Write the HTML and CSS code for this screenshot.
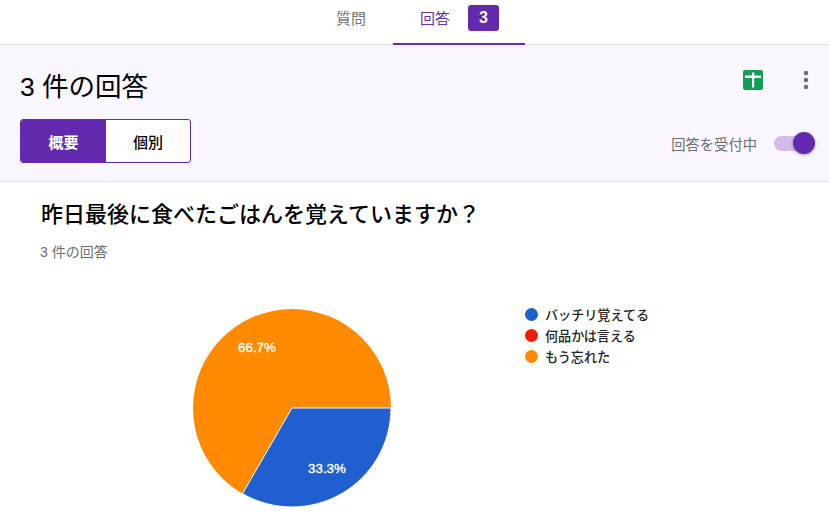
FILE: index.html
```html
<!DOCTYPE html>
<html lang="ja">
<head>
<meta charset="utf-8">
<title>回答</title>
<link rel="stylesheet" href="styles.css">
</head>
<body>
<nav class="tabs">
  <a class="tab">質問</a>
  <a class="tab tab-active">回答<span class="badge">3</span></a>
</nav>
<header class="head">
  <div class="head-left">
    <h1 class="count">3 件の回答</h1>
    <div class="seg">
      <span class="seg-item seg-on">概要</span>
      <span class="seg-item">個別</span>
    </div>
  </div>
  <div class="head-right">
    <div class="actions">
      <svg class="sheets" width="20" height="20" viewBox="0 0 20 20"><rect width="20" height="20" rx="2" fill="#0f9d58"/><path d="M9 2.500h2.200V5.500H18v2.400h-6.800v9.600H9V7.900H2V5.500h7z" fill="#fff"/></svg>
      <svg class="more" width="6" height="20" viewBox="0 0 6 20"><circle cx="3" cy="3" r="2.200"/><circle cx="3" cy="10" r="2.200"/><circle cx="3" cy="17" r="2.200"/></svg>
    </div>
    <div class="accept">
      <span class="accept-label">回答を受付中</span>
      <span class="switch"><span class="thumb"></span></span>
    </div>
  </div>
</header>
<main class="question">
  <h2 class="q-title">昨日最後に食べたごはんを覚えていますか？</h2>
  <p class="q-sub">3 件の回答</p>
  <section class="chart">
    <svg class="pie" width="200" height="200" viewBox="0 0 200 200">
      <circle cx="100" cy="100" r="99" fill="#ff8a00"/>
      <path d="M100 100H199A99 99 0 0 1 50.500 185.700Z" fill="#1f5fd0" stroke="#fff" stroke-width="1"/>
      <text class="pie-label" x="65" y="44">66.7%</text>
      <text class="pie-label" x="135" y="165">33.3%</text>
    </svg>
    <ul class="legend">
      <li class="legend-item"><i class="dot dot-blue"></i>バッチリ覚えてる</li>
      <li class="legend-item"><i class="dot dot-red"></i>何品かは言える</li>
      <li class="legend-item"><i class="dot dot-orange"></i>もう忘れた</li>
    </ul>
  </section>
</main>
</body>
</html>
```
FILE: styles.css
```css
* { box-sizing: border-box; }
html, body { margin: 0; height: 100%; overflow: hidden; background: #fff; }
body { font-family: "Liberation Sans", "Noto Sans CJK JP", sans-serif; color: #000; }

.tabs { height: 45px; display: flex; justify-content: center; border-bottom: 1px solid #e0dfe3; padding-left: 5px; }
.tab { height: 44px; display: flex; align-items: center; font-size: 15px; color: #757575; padding: 0 27px 9px; }
.tab-active { color: #6a2db4; border-bottom: 2px solid #6a2db4; margin-bottom: -1px; height: 45px; padding-right: 26px; }
.badge { margin: 2px 0 0 18px; width: 31px; height: 26px; border-radius: 3px; background: #632ab0; color: #fff; font-size: 16px; font-weight: 700; display: flex; align-items: center; justify-content: center; }

.head { height: 137px; background: #f9f7fd; border-bottom: 1px solid #e0dfe3; display: flex; justify-content: space-between; padding: 25px 14px 0 20px; }
.count { margin: 0; font-size: 26.500px; font-weight: 400; line-height: 34px; }
.seg { margin-top: 15px; width: 171px; height: 44px; display: flex; border: 1px solid #632ab0; border-radius: 3px; overflow: hidden; background: #fff; }
.seg-item { flex: 0 0 85px; display: flex; align-items: center; justify-content: center; font-size: 15px; font-weight: 500; }
.seg-on { background: #632ab0; color: #fff; font-weight: 700; }
.seg-item:last-child { flex: 1; }

.head-right { display: flex; flex-direction: column; align-items: flex-end; }
.actions { display: flex; align-items: center; gap: 40px; padding-right: 6px; }
.more { fill: #6b6b6b; }
.sheets { display: block; }
.accept { margin-top: 43px; display: flex; align-items: center; gap: 17px; }
.accept-label { font-size: 14.300px; color: #6e6e6e; }
.switch { position: relative; display: block; width: 38px; height: 15px; border-radius: 8px; background: #d0bce9; margin-right: 3px; }
.thumb { position: absolute; right: -3px; top: -4px; width: 22px; height: 22px; border-radius: 50%; background: #632ab0; box-shadow: 0 1px 3px rgba(0,0,0,.35); }

.question { padding: 19px 0 0 41px; }
.q-title { margin: 0; font-size: 22px; font-weight: 500; line-height: 28px; }
.q-sub { margin: 13px 0 0 -1px; font-size: 14px; line-height: 20px; color: #6e6e6e; }
.chart { display: flex; align-items: flex-start; margin-top: 46px; padding-left: 151px; }
.pie { display: block; flex: none; }
.pie-label { font-size: 13.330px; font-family: "Liberation Sans", sans-serif; fill: #fff; stroke: #fff; stroke-width: .35px; text-anchor: middle; }
.legend { list-style: none; margin: -4px 0 0 133px; padding: 0; }
.legend-item { display: flex; align-items: center; font-size: 13.100px; font-weight: 500; height: 21px; color: #222; }
.dot { width: 13px; height: 13px; border-radius: 50%; margin-right: 7px; flex: none; }
.dot-blue { background: #1f5fd0; }
.dot-red { background: #ee1c00; }
.dot-orange { background: #ff8a00; }
```
